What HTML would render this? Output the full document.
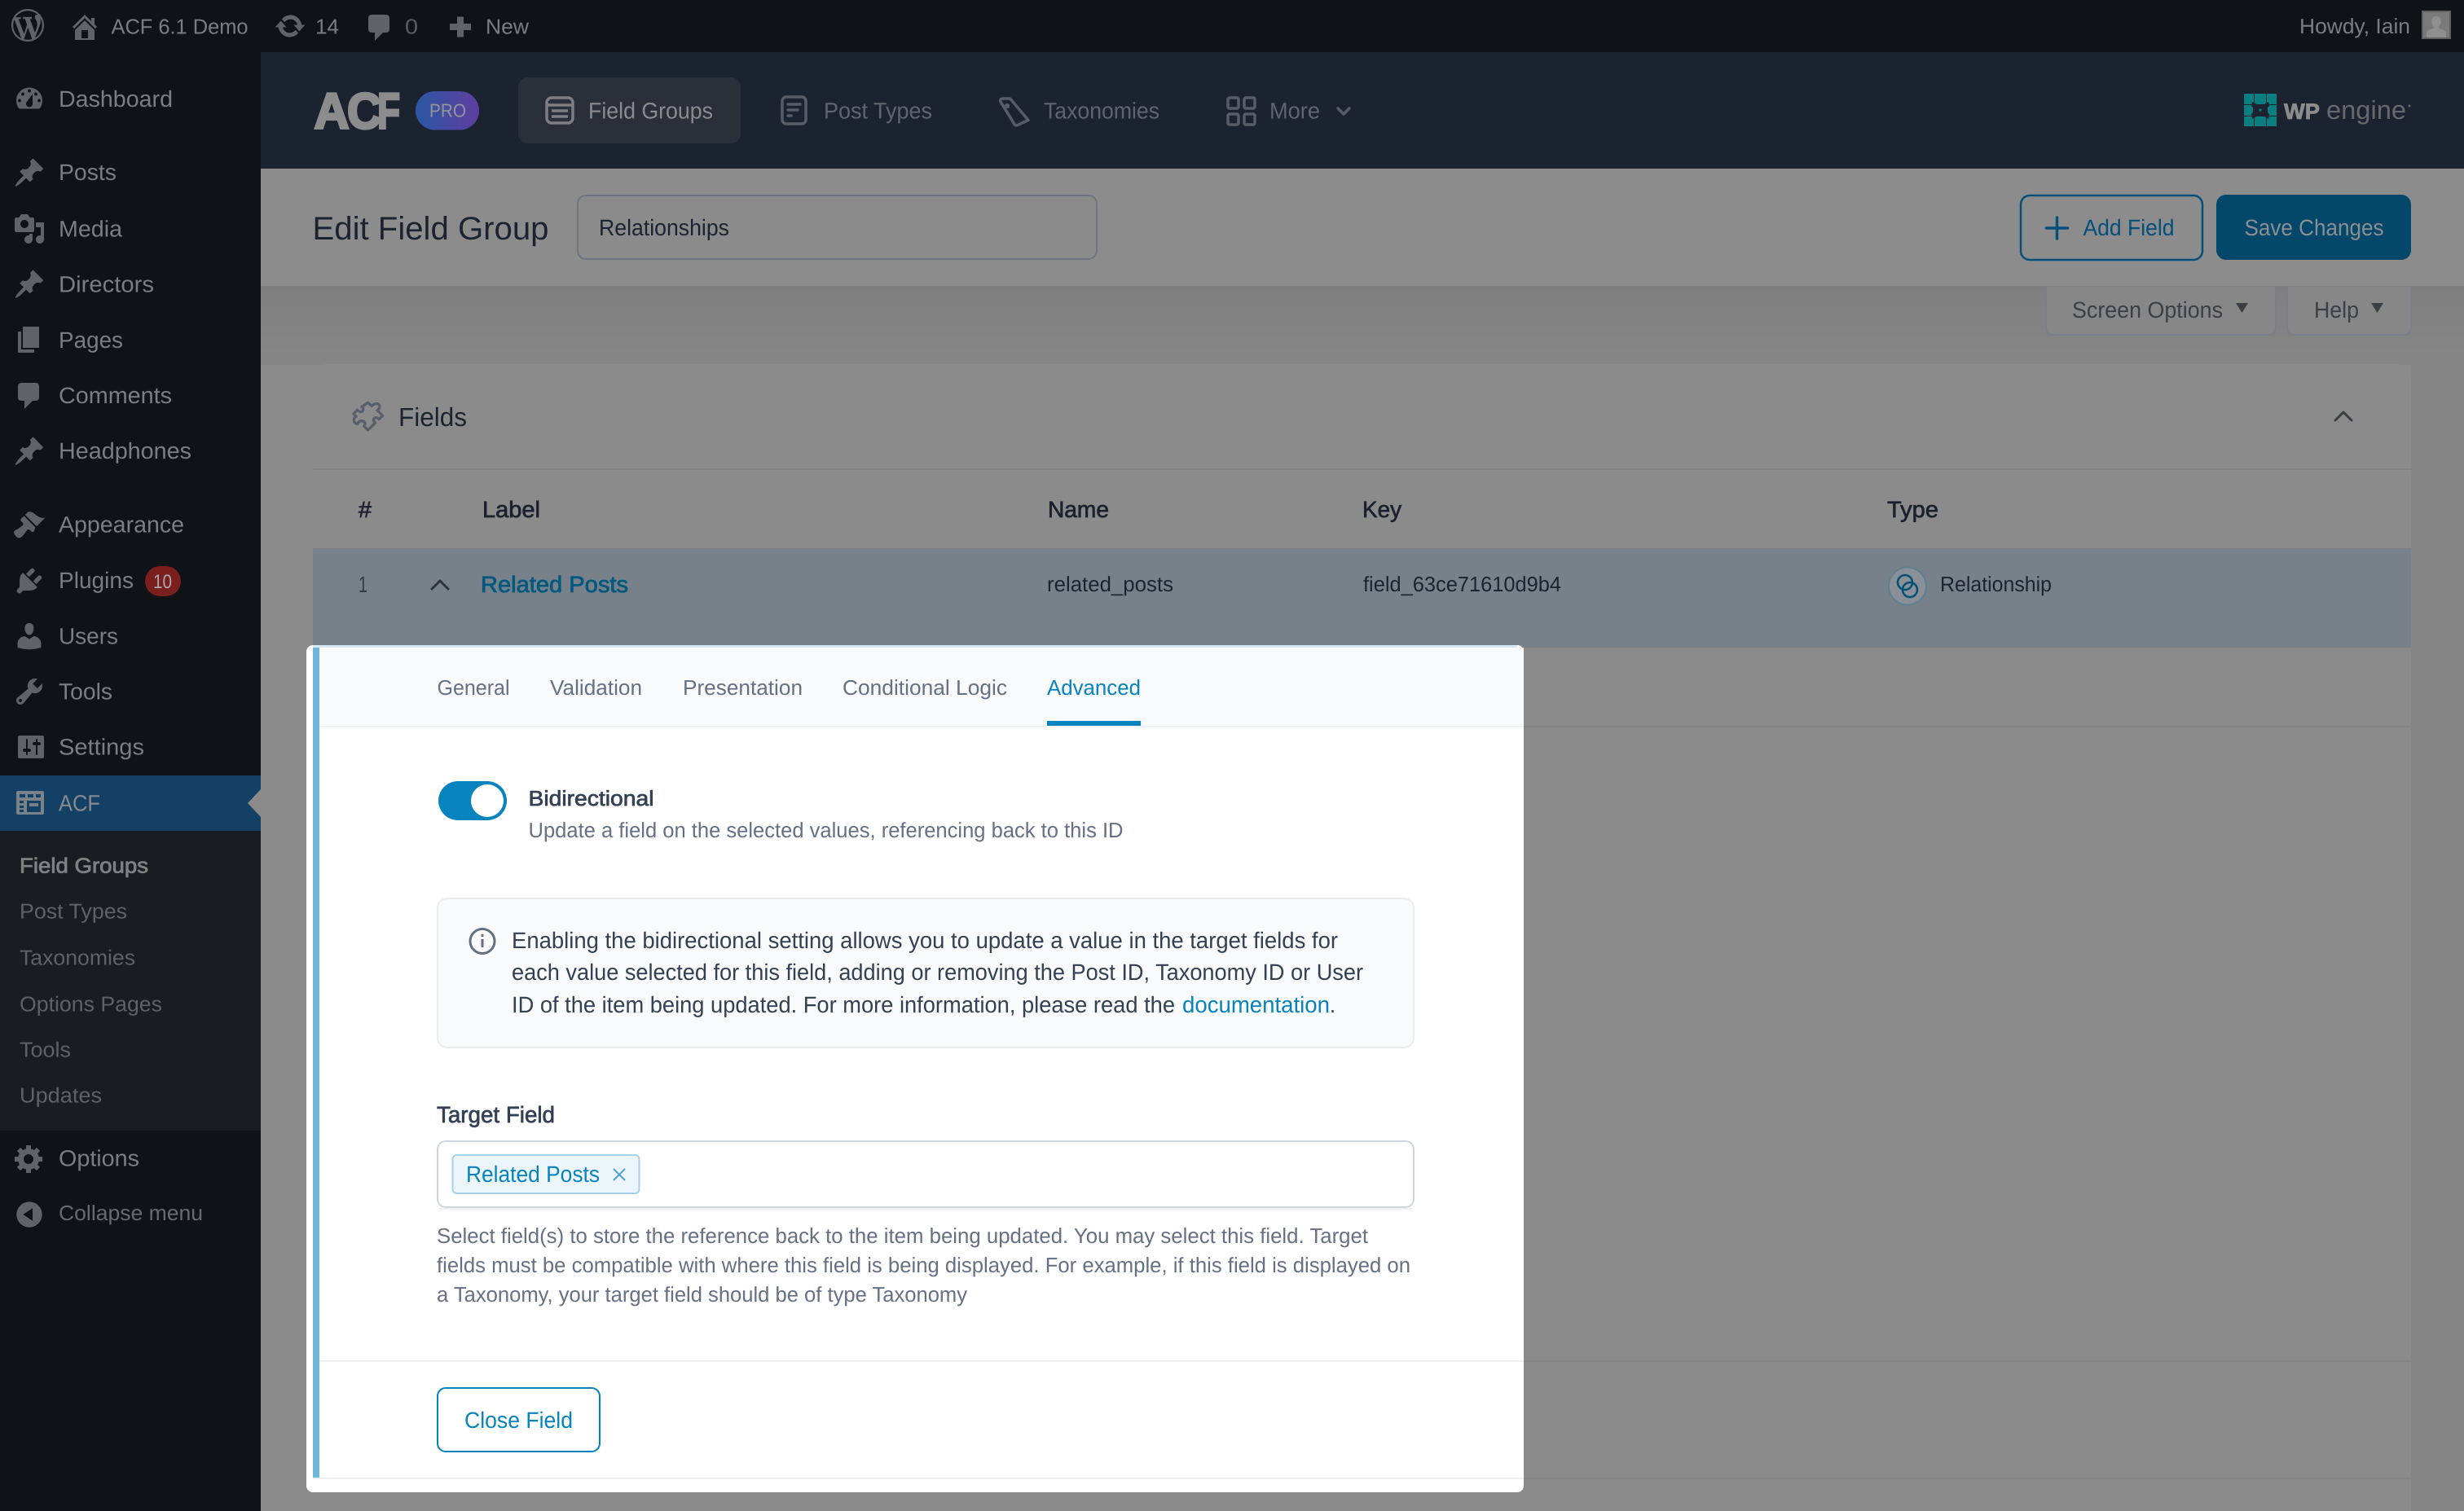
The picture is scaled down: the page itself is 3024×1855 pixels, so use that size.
<!DOCTYPE html>
<html lang="en"><head><meta charset="utf-8"><title>Edit Field Group</title>
<style>
html,body{margin:0;padding:0;background:#8a8a8a;width:3024px;height:1855px;overflow:hidden}
svg{display:block}
text{font-family:"Liberation Sans",sans-serif;text-rendering:geometricPrecision}
.a{font-size:26px;fill:#7b7d7f}
.m{font-size:28px;fill:#7c7d7f}
.s{font-size:26px;fill:#5e6265}
.n{font-size:28px;fill:#5f646e}
.t{font-size:26px;fill:#667085}
.i{font-size:28px;fill:#344054}
.d{font-size:26px;fill:#667085}
.h{font-size:28px;fill:#1a2230;stroke:#1a2230;stroke-width:.7px}
.ic{fill:#5f6366}
</style></head><body>
<svg xmlns="http://www.w3.org/2000/svg" width="3024" height="1855" viewBox="0 0 3024 1855">
<defs>
<linearGradient id="pg" x1="0" y1="0" x2="0" y2="1"><stop offset="0" stop-color="#7f7f7f"/><stop offset="1" stop-color="#868686"/></linearGradient>
<linearGradient id="pro" x1="0" y1="0" x2="1" y2="0"><stop offset="0" stop-color="#2a57a3"/><stop offset="1" stop-color="#5f3ea0"/></linearGradient>
<path id="pin" d="M10.44 3.02l1.82-1.82 6.36 6.35-1.83 1.82c-1.05-.68-2.48-.57-3.41.36l-.75.75c-.92.93-1.04 2.35-.35 3.41l-1.83 1.82-2.41-2.41-2.8 2.79c-.42.42-3.38 2.71-3.8 2.29s1.86-3.39 2.28-3.81l2.79-2.79L4.1 9.36l1.83-1.82c1.05.69 2.48.57 3.4-.36l.75-.75c.93-.92 1.05-2.35.36-3.41z"/>
<path id="cmt" d="M5 2h9c1.1 0 2 .9 2 2v7c0 1.1-.9 2-2 2h-2l-5 5v-5H5c-1.1 0-2-.9-2-2V4c0-1.1.9-2 2-2z"/>
</defs>

<!-- page background -->
<rect width="3024" height="1855" fill="#8a8a8a"/>
<rect x="320" y="352" width="2704" height="96" fill="url(#pg)"/>
<rect x="2959" y="448" width="65" height="1407" fill="#858585"/>

<!-- admin bar -->
<rect width="3024" height="64" fill="#0f1316"/>
<path class="ic" transform="translate(14,11) scale(2)" fill-rule="evenodd" d="M20 10c0-5.51-4.49-10-10-10C4.48 0 0 4.49 0 10c0 5.52 4.48 10 10 10 5.51 0 10-4.48 10-10zM7.78 15.37L4.37 6.22c.55-.02 1.17-.08 1.17-.08.5-.06.44-1.13-.06-1.11 0 0-1.45.11-2.37.11-.18 0-.37 0-.58-.01C4.12 2.69 6.87 1.11 10 1.11c2.33 0 4.45.87 6.05 2.34-.68-.11-1.65.39-1.65 1.58 0 .74.45 1.36.9 2.1.35.61.55 1.36.55 2.46 0 1.49-1.4 5-1.4 5l-3.03-8.37c.54-.02.82-.17.82-.17.5-.05.44-1.25-.06-1.22 0 0-1.44.12-2.38.12-.87 0-2.33-.12-2.33-.12-.5-.03-.56 1.2-.06 1.22l.92.08 1.26 3.41zM17.41 10c.24-.64.74-1.87.43-4.25.7 1.29 1.05 2.71 1.05 4.25 0 3.29-1.73 6.24-4.4 7.78.97-2.59 1.94-5.2 2.92-7.78zM6.1 18.09C3.12 16.65 1.11 13.53 1.11 10c0-1.3.23-2.48.72-3.59C3.25 10.3 4.67 14.2 6.1 18.09zm4.03-6.63l2.58 6.98c-.86.29-1.76.45-2.71.45-.79 0-1.57-.11-2.29-.33.81-2.38 1.62-4.74 2.42-7.1z"/>
<path class="ic" transform="translate(84,13) scale(2)" fill-rule="evenodd" d="M16 8.5l1.53 1.53-1.06 1.06L10 4.62l-6.47 6.47-1.06-1.06L10 2.5l4 4v-2h2v4zm-6-2.46l6 5.99V18H4v-5.97zM12 17v-5H8v5h4z"/>
<text class="a" x="136.500" y="41.500" textLength="168" lengthAdjust="spacingAndGlyphs">ACF 6.1 Demo</text>
<path class="ic" transform="translate(336,12) scale(2)" d="M10.2 3.28c3.53 0 6.43 2.61 6.92 6h2.08l-3.5 4-3.5-4h2.32c-.45-1.97-2.21-3.45-4.32-3.45-1.45 0-2.73.71-3.54 1.78L4.95 5.66C6.23 4.2 8.11 3.28 10.2 3.28zm-.4 13.44c-3.52 0-6.43-2.61-6.92-6H.8l3.5-4c1.17 1.33 2.33 2.67 3.5 4H5.48c.45 1.97 2.21 3.45 4.32 3.45 1.45 0 2.73-.71 3.54-1.78l1.71 1.95c-1.28 1.46-3.15 2.38-5.25 2.38z"/>
<text class="a" x="387" y="41.500" textLength="29" lengthAdjust="spacingAndGlyphs">14</text>
<use href="#cmt" class="ic" transform="translate(446,14) scale(2)"/>
<text class="a" x="497" y="41.500" textLength="16" lengthAdjust="spacingAndGlyphs" style="fill:#5a5c5f">0</text>
<rect x="561" y="20.500" width="8" height="25" class="ic"/><rect x="552" y="29" width="26" height="8" class="ic"/>
<text class="a" x="596" y="41.500" textLength="53" lengthAdjust="spacingAndGlyphs">New</text>
<text class="a" x="2822" y="41" textLength="136" lengthAdjust="spacingAndGlyphs">Howdy, Iain</text>
<rect x="2972" y="13" width="36" height="35" fill="#5f6062"/>
<rect x="2974" y="15" width="32" height="31" fill="#7a7a7a"/>
<path d="M2990 20c4 0 6 3 5.600 7-.3 3-1.400 5-2.600 6l1 2c3 1 7 2 8 5v6h-24v-6c1-3 5-4 8-5l1-2c-1.200-1-2.300-3-2.600-6-.4-4 1.600-7 5.600-7z" fill="#8f8f8f"/>

<!-- sidebar -->
<rect y="64" width="320" height="1791" fill="#0f1316"/>
<rect y="952" width="320" height="68" fill="#134064"/>
<rect y="1020" width="320" height="368" fill="#191d21"/>
<path d="M320 969v34l-16-17z" fill="#8a8a8a"/>

<path class="ic" transform="translate(16,101.500) scale(2)" fill-rule="evenodd" d="M3.76 16h12.48c1.1-1.37 1.76-3.11 1.76-5 0-4.42-3.58-8-8-8s-8 3.58-8 8c0 1.89.66 3.63 1.76 5zM10 4c.55 0 1 .45 1 1s-.45 1-1 1-1-.45-1-1 .45-1 1-1zM6 6c.55 0 1 .45 1 1s-.45 1-1 1-1-.45-1-1 .45-1 1-1zm8 0c.55 0 1 .45 1 1s-.45 1-1 1-1-.45-1-1 .45-1 1-1zm-5.370 5.550L12 7v6c0 1.100-.9 2-2 2s-2-.9-2-2c0-.57.24-1.080.63-1.450zM4 10c.55 0 1 .45 1 1s-.45 1-1 1-1-.45-1-1 .45-1 1-1zm12 0c.55 0 1 .45 1 1s-.45 1-1 1-1-.45-1-1 .45-1 1-1z"/>
<text class="m" x="72" y="131" textLength="140" lengthAdjust="spacingAndGlyphs">Dashboard</text>

<use href="#pin" class="ic" transform="translate(16,192) scale(2)"/>
<text class="m" x="72" y="221" textLength="71" lengthAdjust="spacingAndGlyphs">Posts</text>

<path class="ic" transform="translate(16,261) scale(2)" fill-rule="evenodd" d="M13 11V4c0-.55-.45-1-1-1h-1.670L9 1H5L3.670 3H2c-.55 0-1 .45-1 1v7c0 .55.45 1 1 1h10c.55 0 1-.45 1-1zM7 4.500c1.380 0 2.500 1.120 2.500 2.500S8.380 9.500 7 9.500 4.500 8.380 4.500 7 5.620 4.500 7 4.500zM14 6h5v10.500c0 1.380-1.120 2.500-2.500 2.500S14 17.880 14 16.500s1.120-2.500 2.500-2.500c.17 0 .34.02.5.05V9h-3V6zm-4 8.050V13h2v3.500c0 1.380-1.120 2.500-2.500 2.500S7 17.880 7 16.500 8.120 14 9.500 14c.17 0 .34.02.5.05z"/>
<text class="m" x="72" y="290.500" textLength="78" lengthAdjust="spacingAndGlyphs">Media</text>

<use href="#pin" class="ic" transform="translate(16,329) scale(2)"/>
<text class="m" x="72" y="358.500" textLength="117" lengthAdjust="spacingAndGlyphs">Directors</text>

<path class="ic" transform="translate(16,397) scale(2)" fill-rule="evenodd" d="M6 15V2h10v13H6zm-1 1h8v2H3V5h2v11z"/>
<text class="m" x="72" y="427" textLength="79" lengthAdjust="spacingAndGlyphs">Pages</text>

<use href="#cmt" class="ic" transform="translate(16,466) scale(2)"/>
<text class="m" x="72" y="495" textLength="139" lengthAdjust="spacingAndGlyphs">Comments</text>

<use href="#pin" class="ic" transform="translate(16,534) scale(2)"/>
<text class="m" x="72" y="563" textLength="163" lengthAdjust="spacingAndGlyphs">Headphones</text>

<path class="ic" transform="translate(16,624) scale(2)" d="M14.480 11.060L7.410 3.990l1.500-1.500c.5-.56 2.300-.47 3.510.32 1.210.8 1.430 1.280 2.910 2.100 1.180.64 2.450 1.260 4.450.85zm-.71.71L6.700 4.700 4.930 6.470c-.39.39-.39 1.020 0 1.410l1.060 1.060c.39.39.39 1.030 0 1.420-.6.6-1.430 1.110-2.210 1.690-.35.26-.7.53-1.010.84C1.430 13.230.5 14.070.5 14.900c0 .21.05.42.14.59C1.830 17.840 3.470 19 5 17.670c.83-.6 1.550-1.430 2.160-2.220.54-.74 1.080-1.490 1.610-2.190.39-.39 1.030-.39 1.420 0l1.060 1.060c.39.39 1.020.39 1.410 0z"/>
<text class="m" x="72" y="653.500" textLength="154" lengthAdjust="spacingAndGlyphs">Appearance</text>

<path class="ic" transform="translate(16,693) scale(2)" d="M13.110 4.360L9.870 7.600 8 5.730l3.240-3.240c.35-.34 1.050-.2 1.560.32.52.51.66 1.210.31 1.550zm-8 1.770l.91-1.120 9.010 9.010-1.190.84c-.71.71-2.630 1.160-3.820 1.160H6.140L4.900 17.260c-.59.59-1.540.59-2.120 0-.59-.58-.59-1.530 0-2.120l1.240-1.240v-3.880c0-1.130.4-3.190 1.090-3.890zm7.260 3.970l3.240-3.240c.34-.35 1.040-.21 1.550.31.52.51.66 1.210.31 1.550l-3.240 3.250z"/>
<text class="m" x="72" y="722" textLength="92" lengthAdjust="spacingAndGlyphs">Plugins</text>
<rect x="178" y="695" width="44" height="37" rx="18.500" fill="#7a1e1e"/>
<text x="188" y="722" font-size="24" fill="#a9a9a9" textLength="23" lengthAdjust="spacingAndGlyphs">10</text>

<path class="ic" transform="translate(16,761) scale(2)" d="M10 9.250c-2.270 0-2.730-3.440-2.730-3.440C7 4.020 7.820 2 9.970 2c2.160 0 2.980 2.020 2.710 3.810 0 0-.41 3.440-2.680 3.440zm0 2.570L12.720 10c2.390 0 4.520 2.330 4.520 4.530v2.490s-3.650 1.130-7.240 1.130c-3.650 0-7.240-1.130-7.240-1.130v-2.490c0-2.250 1.940-4.480 4.470-4.480z"/>
<text class="m" x="72" y="790.500" textLength="73" lengthAdjust="spacingAndGlyphs">Users</text>

<path class="ic" transform="translate(16,829) scale(2)" fill-rule="evenodd" d="M16.680 9.770c-1.340 1.340-3.300 1.670-4.950.99l-5.410 6.520c-.99.99-2.590.99-3.580 0s-.99-2.590 0-3.570l6.520-5.420c-.68-1.650-.35-3.610.99-4.950 1.280-1.280 3.120-1.620 4.720-1.060l-2.890 2.890 2.820 2.820 2.860-2.870c.53 1.580.18 3.390-1.080 4.670zM3.810 16.210c.4.39 1.040.39 1.430 0 .4-.4.4-1.040 0-1.430-.39-.4-1.030-.4-1.430 0-.39.39-.39 1.030 0 1.430z"/>
<text class="m" x="72" y="858.500" textLength="66" lengthAdjust="spacingAndGlyphs">Tools</text>

<path class="ic" transform="translate(18,897) scale(2)" fill-rule="evenodd" d="M18 16V4c0-.55-.45-1-1-1H3c-.55 0-1 .45-1 1v12c0 .55.45 1 1 1h14c.55 0 1-.45 1-1zM8 11h1c.55 0 1 .45 1 1s-.45 1-1 1H8v1.500c0 .28-.22.5-.5.5s-.5-.22-.5-.5V13H6c-.55 0-1-.45-1-1s.45-1 1-1h1V5.500c0-.28.22-.5.5-.5s.5.22.5.5V11zm5-2h-1c-.55 0-1-.45-1-1s.45-1 1-1h1V5.500c0-.28.22-.5.5-.5s.5.22.5.5V7h1c.55 0 1 .45 1 1s-.45 1-1 1h-1v5.500c0 .28-.22.5-.5.5s-.5-.22-.5-.5V9z"/>
<text class="m" x="72" y="926.500" textLength="105" lengthAdjust="spacingAndGlyphs">Settings</text>

<!-- ACF menu icon -->
<path fill="#7a8289" fill-rule="evenodd" d="M22 971h30a2 2 0 0 1 2 2v25a2 2 0 0 1-2 2H22a2 2 0 0 1-2-2v-25a2 2 0 0 1 2-2zm2 4v4h7v-4zm10 0v4h7v-4zm10 0v4h6v-4zm-20 8v3h5v-3zm0 6v3h5v-3zm0 5v3h5v-3zm9-11v14h17v-14zm3 3h11v4h-11zm-1 6h3v0z"/>
<text class="m" x="72" y="995.500" textLength="51" lengthAdjust="spacingAndGlyphs" style="fill:#858a90">ACF</text>

<text class="s" x="24" y="1071.500" textLength="158" lengthAdjust="spacingAndGlyphs" style="fill:#7f8082;stroke:#7f8082;stroke-width:.8px">Field Groups</text>
<text class="s" x="24" y="1127.500" textLength="132" lengthAdjust="spacingAndGlyphs">Post Types</text>
<text class="s" x="24" y="1184.500" textLength="142" lengthAdjust="spacingAndGlyphs">Taxonomies</text>
<text class="s" x="24" y="1241.500" textLength="175" lengthAdjust="spacingAndGlyphs">Options Pages</text>
<text class="s" x="24" y="1297.500" textLength="63" lengthAdjust="spacingAndGlyphs">Tools</text>
<text class="s" x="24" y="1353.500" textLength="101" lengthAdjust="spacingAndGlyphs">Updates</text>

<path class="ic" transform="translate(16,1402) scale(2)" fill-rule="evenodd" d="M18 12h-2.180c-.17.7-.44 1.350-.81 1.930l1.540 1.540-2.100 2.100-1.540-1.540c-.58.36-1.230.63-1.910.79V19H8v-2.180c-.68-.16-1.330-.43-1.910-.79l-1.540 1.540-2.120-2.120 1.540-1.540c-.36-.58-.63-1.230-.79-1.910H1V9.030h2.170c.16-.7.44-1.350.8-1.940L2.430 5.550l2.100-2.100 1.540 1.540c.58-.37 1.240-.64 1.930-.81V2h3v2.180c.68.16 1.330.43 1.910.79l1.540-1.540 2.120 2.120-1.540 1.540c.36.59.64 1.240.8 1.940H18V12zm-8.500 1.500c1.660 0 3-1.340 3-3s-1.340-3-3-3-3 1.340-3 3 1.340 3 3 3z"/>
<text class="m" x="72" y="1431.500" textLength="99" lengthAdjust="spacingAndGlyphs">Options</text>
<path class="ic" transform="translate(16,1471) scale(2)" fill-rule="evenodd" d="M10 2.160c4.330 0 7.840 3.510 7.840 7.840s-3.510 7.840-7.840 7.840S2.160 14.330 2.160 10 5.710 2.160 10 2.160zm2 11.720V6.120L6.180 9.970z"/>
<text class="s" x="72" y="1498" textLength="177" lengthAdjust="spacingAndGlyphs" style="fill:#686b6e">Collapse menu</text>

<!-- ACF header -->
<rect x="320" y="64" width="2704" height="143" fill="#1c2330"/>
<g font-size="62" font-weight="bold" fill="#8c8c8c" stroke="#8c8c8c" stroke-width="3">
<text x="385.500" y="157.500" textLength="43" lengthAdjust="spacingAndGlyphs">A</text>
<text x="426" y="157.500" textLength="42" lengthAdjust="spacingAndGlyphs">C</text>
<text x="463" y="157.500" textLength="28" lengthAdjust="spacingAndGlyphs">F</text>
</g>
<rect x="510" y="112" width="78" height="47.500" rx="23.700" fill="url(#pro)"/>
<text x="527" y="143.500" font-size="23" fill="#959598" textLength="45" lengthAdjust="spacingAndGlyphs">PRO</text>

<rect x="636" y="95" width="273" height="81" rx="12" fill="#2a303a"/>
<g fill="none" stroke="#7c7e84" stroke-width="3.500">
<rect x="671" y="120" width="32" height="31" rx="6"/>
<path d="M671 129h32M677 136h20M677 143h20" stroke-width="3.500"/>
</g>
<text x="722" y="145.500" font-size="28" fill="#8a8b8e" textLength="153" lengthAdjust="spacingAndGlyphs">Field Groups</text>

<g fill="none" stroke="#575c66" stroke-width="3.500" stroke-linecap="round" stroke-linejoin="round">
<rect x="960" y="119" width="29" height="33" rx="5"/>
<path d="M967 128h15M967 135h12M967 142h4"/>
<path d="M1228 125c-1-2 0-4 3-4h7a3 3 0 0 1 3 1.500l21 25-13 6a3 3 0 0 1-4-1z" />
<circle cx="1236" cy="130" r="1.500"/>
<rect x="1507" y="120" width="13" height="13" rx="2"/><rect x="1527" y="120" width="13" height="13" rx="2"/>
<rect x="1507" y="140" width="13" height="13" rx="2"/><rect x="1527" y="140" width="13" height="13" rx="2"/>
<path d="M1642 133l7 7 7-7"/>
</g>
<text class="n" x="1011" y="145.500" textLength="133" lengthAdjust="spacingAndGlyphs">Post Types</text>
<text class="n" x="1281" y="145.500" textLength="142" lengthAdjust="spacingAndGlyphs">Taxonomies</text>
<text class="n" x="1558" y="145.500" textLength="62" lengthAdjust="spacingAndGlyphs">More</text>

<!-- WP engine -->
<rect x="2754" y="115" width="40" height="40" rx="1" fill="#0b7f80"/>
<g fill="#1c2330">
<path d="M2766 115h1v13h-1zM2781 115h1v13h-1zM2754 128h10v1h-10zM2784 128h10v1h-10zM2754 142h10v1h-10zM2784 142h10v1h-10zM2766 143h1v12h-1zM2781 143h1v12h-1z"/>
<path d="M2764 125l5 3h10l5-3 1 5-2 2v6l2 2-1 6-5-3h-10l-5 3-1-6 2-2v-6l-2-2z"/>
</g>
<rect x="2772.500" y="133.500" width="3" height="3" fill="#0b7f80"/>
<text x="2803" y="146" font-size="27" font-weight="bold" fill="#8c8c8c" stroke="#8c8c8c" stroke-width=".8" textLength="44" lengthAdjust="spacingAndGlyphs">WP</text>
<text x="2855" y="146" font-size="32" fill="#65686d" textLength="98" lengthAdjust="spacingAndGlyphs">engine</text>
<circle cx="2957" cy="130" r="1.500" fill="#65686d"/>

<!-- page header bar -->
<rect x="320" y="207" width="2704" height="145" fill="#8c8c8c"/>
<rect x="320" y="351" width="2704" height="1" fill="#7c7c7c"/>
<text x="383.500" y="294" font-size="40" fill="#1c2330" textLength="290" lengthAdjust="spacingAndGlyphs">Edit Field Group</text>
<rect x="709" y="240" width="637" height="78" rx="10" fill="#8b8b8b" stroke="#6f7480" stroke-width="2"/>
<text x="735" y="289" font-size="28" fill="#1c2330" textLength="160" lengthAdjust="spacingAndGlyphs">Relationships</text>
<rect x="2480" y="240" width="223" height="79" rx="11" fill="#8c8c8c" stroke="#04507b" stroke-width="2.500"/>
<path d="M2524.500 267v26M2511.500 280h26" stroke="#04507b" stroke-width="3.500" stroke-linecap="round" fill="none"/>
<text x="2556.500" y="289" font-size="28" fill="#04507b" textLength="112" lengthAdjust="spacingAndGlyphs">Add Field</text>
<rect x="2720" y="239" width="239" height="80" rx="12" fill="#03486a"/>
<text x="2754.500" y="289" font-size="28" fill="#8b8e90" textLength="171" lengthAdjust="spacingAndGlyphs">Save Changes</text>

<!-- screen options -->
<path d="M2511 352v51a8 8 0 0 0 8 8h266a8 8 0 0 0 8-8v-51" fill="#878787" stroke="#7a7f88" stroke-width="2"/>
<path d="M2807 352v51a8 8 0 0 0 8 8h136a8 8 0 0 0 8-8v-51" fill="#878787" stroke="#7a7f88" stroke-width="2"/>
<text x="2543" y="390" font-size="28" fill="#3b3f44" textLength="185" lengthAdjust="spacingAndGlyphs">Screen Options</text>
<path d="M2744 372h15l-7.500 12z" fill="#3b3f44"/>
<text x="2840" y="390" font-size="28" fill="#3b3f44" textLength="55" lengthAdjust="spacingAndGlyphs">Help</text>
<path d="M2910 372h15l-7.500 12z" fill="#3b3f44"/>

<!-- fields card -->
<path d="M384 1855V463a16 16 0 0 1 16-16h2543a16 16 0 0 1 16 16v1392z" fill="#8b8b8b"/>
<rect x="384" y="575" width="2575" height="2" fill="#838383"/>
<rect x="384" y="673" width="2575" height="122" fill="#78808a"/>
<rect x="384" y="891" width="2575" height="2" fill="#828282"/>
<rect x="384" y="1670" width="2575" height="2" fill="#828282"/>
<rect x="384" y="1814" width="2575" height="2" fill="#828282"/>
<path transform="translate(420,480) scale(.3333)" fill="none" stroke="#59606c" stroke-width="10" stroke-linejoin="round" stroke-linecap="round" d="M95 43l14 12c8-8 21-12 27-4 5 7 1 14-7 20l20 20-14 13c-6-7-14-8-18-3-4 6-1 11 5 16l-27 27-15-14c6-8 5-14-1-18-9-5-20 0-21 8-9 3-15-6-15-14 0-6 4-10 8-12l-8-8-1-2 13-14c7 7 15 9 20 4 4-6 3-12-3-16z"/>
<text x="489" y="523" font-size="32" fill="#1c2330" textLength="84" lengthAdjust="spacingAndGlyphs">Fields</text>
<path d="M2866 516l10-10 10 10" fill="none" stroke="#3b3f44" stroke-width="3" stroke-linecap="round" stroke-linejoin="round"/>

<text class="h" x="440" y="635" textLength="16" lengthAdjust="spacingAndGlyphs">#</text>
<text class="h" x="592" y="635" textLength="71" lengthAdjust="spacingAndGlyphs">Label</text>
<text class="h" x="1286" y="635" textLength="75" lengthAdjust="spacingAndGlyphs">Name</text>
<text class="h" x="1672" y="635" textLength="48" lengthAdjust="spacingAndGlyphs">Key</text>
<text class="h" x="2316" y="635" textLength="63" lengthAdjust="spacingAndGlyphs">Type</text>

<text x="440" y="727" font-size="28" fill="#343b47" textLength="11" lengthAdjust="spacingAndGlyphs">1</text>
<path d="M530 723l10-10 10 10" fill="none" stroke="#2c323c" stroke-width="3" stroke-linecap="round" stroke-linejoin="round"/>
<text x="590" y="727" font-size="28" fill="#04597f" stroke="#04597f" stroke-width=".8" textLength="181" lengthAdjust="spacingAndGlyphs">Related Posts</text>
<text x="1285" y="726" font-size="26" fill="#1c2330" textLength="155" lengthAdjust="spacingAndGlyphs">related_posts</text>
<text x="1673" y="726" font-size="26" fill="#1c2330" textLength="243" lengthAdjust="spacingAndGlyphs">field_63ce71610d9b4</text>
<circle cx="2341" cy="719.500" r="23" fill="#8a9097" stroke="#5f8193" stroke-width="2"/>
<circle cx="2338" cy="715" r="9" fill="none" stroke="#044f75" stroke-width="2.500"/>
<circle cx="2344" cy="724" r="9" fill="none" stroke="#044f75" stroke-width="2.500"/>
<text x="2381" y="726" font-size="26" fill="#1c2330" textLength="137" lengthAdjust="spacingAndGlyphs">Relationship</text>

<!-- open panel -->
<rect x="376" y="792" width="1494" height="1040" rx="8" fill="#fff"/>
<path d="M384 792h1478a8 8 0 0 1 8 8v0l-8-4H384z" fill="#d5e8f4"/>
<rect x="392" y="795" width="1478" height="97" fill="#f9fafb"/>
<path d="M1862 795a8 8 0 0 1 8 8v-3a8 8 0 0 0-8-8z" fill="#fff"/>
<rect x="392" y="891" width="1478" height="2" fill="#f0f2f5"/>
<rect x="384" y="795" width="8" height="1020" fill="#6fb5d9"/>

<text class="t" x="536.500" y="853" textLength="89" lengthAdjust="spacingAndGlyphs">General</text>
<text class="t" x="675" y="853" textLength="113" lengthAdjust="spacingAndGlyphs">Validation</text>
<text class="t" x="838" y="853" textLength="147" lengthAdjust="spacingAndGlyphs">Presentation</text>
<text class="t" x="1034" y="853" textLength="202" lengthAdjust="spacingAndGlyphs">Conditional Logic</text>
<text class="t" x="1285" y="853" textLength="115" lengthAdjust="spacingAndGlyphs" style="fill:#0783be">Advanced</text>
<rect x="1285" y="885" width="115" height="6" fill="#0783be"/>

<rect x="538" y="959" width="84" height="48" rx="24" fill="#0783be"/>
<circle cx="598" cy="983" r="20" fill="#fff"/>
<text x="648.500" y="989" font-size="26" fill="#344054" stroke="#344054" stroke-width=".7" textLength="154" lengthAdjust="spacingAndGlyphs">Bidirectional</text>
<text x="648.500" y="1028" font-size="26" fill="#667085" textLength="730" lengthAdjust="spacingAndGlyphs">Update a field on the selected values, referencing back to this ID</text>

<rect x="537" y="1103" width="1198" height="183" rx="12" fill="#f9fafb" stroke="#eaecf0" stroke-width="2"/>
<circle cx="592" cy="1155.500" r="15" fill="none" stroke="#667085" stroke-width="3"/>
<rect x="590.500" y="1153" width="3" height="10" fill="#667085"/><rect x="590.500" y="1147" width="3" height="3" fill="#667085"/>
<text class="i" x="628" y="1164" textLength="1014" lengthAdjust="spacingAndGlyphs">Enabling the bidirectional setting allows you to update a value in the target fields for</text>
<text class="i" x="628" y="1203" textLength="1045" lengthAdjust="spacingAndGlyphs">each value selected for this field, adding or removing the Post ID, Taxonomy ID or User</text>
<text class="i" x="628" y="1243" textLength="814" lengthAdjust="spacingAndGlyphs">ID of the item being updated. For more information, please read the</text>
<text class="i" x="1451" y="1243" textLength="181" lengthAdjust="spacingAndGlyphs" style="fill:#0783be">documentation</text>
<text class="i" x="1632" y="1243" textLength="7" lengthAdjust="spacingAndGlyphs">.</text>

<text x="536" y="1378" font-size="28" fill="#344054" stroke="#344054" stroke-width=".7" textLength="145" lengthAdjust="spacingAndGlyphs">Target Field</text>
<rect x="537" y="1401" width="1198" height="81" rx="10" fill="#fff" stroke="#d0d5dd" stroke-width="2"/>
<rect x="539" y="1483" width="1194" height="2" fill="#eef0f3"/>
<rect x="555.500" y="1418" width="229" height="47" rx="5" fill="#ebf5fa" stroke="#a5d2e7" stroke-width="2"/>
<text x="572" y="1451" font-size="28" fill="#0783be" textLength="164" lengthAdjust="spacingAndGlyphs">Related Posts</text>
<path d="M753 1435l14 14M767 1435l-14 14" stroke="#4b9fc8" stroke-width="2" fill="none"/>
<text class="d" x="536" y="1526" textLength="1143" lengthAdjust="spacingAndGlyphs">Select field(s) to store the reference back to the item being updated. You may select this field. Target</text>
<text class="d" x="536" y="1562" textLength="1195" lengthAdjust="spacingAndGlyphs">fields must be compatible with where this field is being displayed. For example, if this field is displayed on</text>
<text class="d" x="536" y="1598" textLength="651" lengthAdjust="spacingAndGlyphs">a Taxonomy, your target field should be of type Taxonomy</text>

<rect x="392" y="1670" width="1478" height="2" fill="#eef0f3"/>
<rect x="537" y="1704" width="199" height="78" rx="10" fill="#fff" stroke="#0783be" stroke-width="2"/>
<text x="570" y="1753" font-size="28" fill="#0783be" textLength="133" lengthAdjust="spacingAndGlyphs">Close Field</text>
<rect x="384" y="1814" width="1486" height="2" fill="#eef0f3"/>
</svg>
</body></html>
